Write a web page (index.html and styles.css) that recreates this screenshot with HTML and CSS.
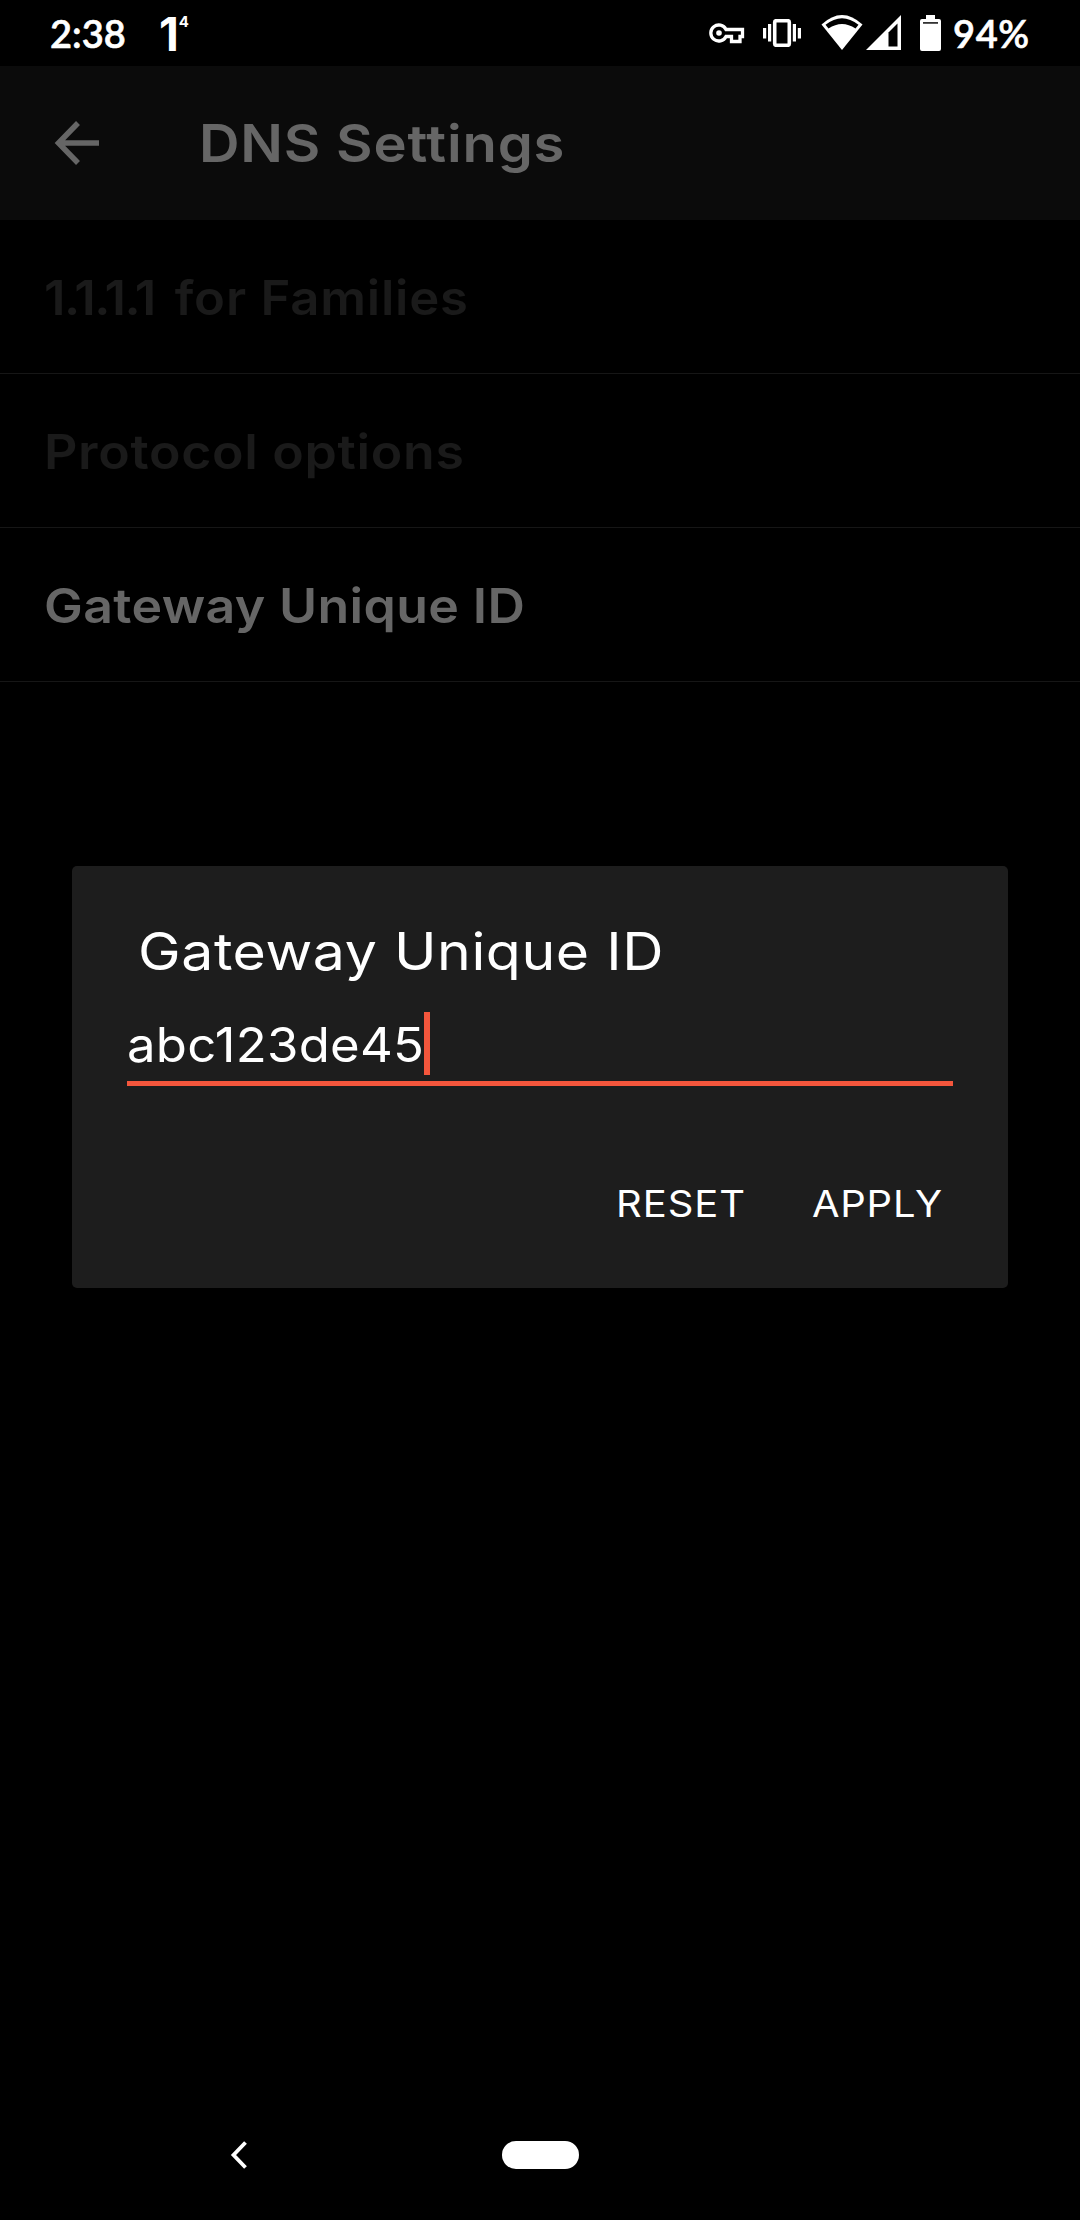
FILE: index.html
```html
<!DOCTYPE html>
<html lang="en">
<head>
<meta charset="utf-8">
<title>DNS Settings</title>
<link rel="stylesheet" href="styles.css">
</head>
<body>
<div class="phone">
  <header class="status">
    <span class="clock">2:38</span>
    <span class="app-mark">1<sup>4</sup></span>
    <div class="status-icons">
      <svg class="key" width="36" height="22" viewBox="0 0 36 22" fill="none" stroke="#fff" stroke-width="3.300"><path d="M17 7.500A8 8 0 1 0 17 14.500H22.500V19.500H31V14.500H33.500V7.500Z"/><circle cx="10" cy="11" r="2.800" fill="#fff" stroke="none"/></svg>
      <svg class="vibrate" width="40" height="28" viewBox="0 0 40 28" fill="#fff"><path d="M1 9h3.200v10.500H1zM6 5h3.200v17.500H6zM30.800 5h3.200v17.500h-3.200zM35.800 9h3.200v10.500h-3.200z"/><rect x="12.700" y="1.700" width="14.600" height="24.600" rx="1.500" fill="none" stroke="#fff" stroke-width="3.600"/></svg>
      <svg class="wifi" width="42" height="35" viewBox="0 0 42 35"><path d="M.5 9.500Q21-9.500 41.500 9.500L21 35Z" fill="#fff"/><path d="M4.500 9.800Q21-3.500 37.500 9.800L34.500 13.500Q21 4.500 7.500 13.500Z" fill="#000"/></svg>
      <svg class="signal" width="35" height="35" viewBox="0 0 35 35"><path d="M0 35 35 0V35Z" fill="#fff"/><path d="M22.500 17.500 31.500 8.500V31.500H22.500Z" fill="#000"/></svg>
      <svg class="battery" width="21" height="36" viewBox="0 0 21 36"><path d="M6 0h9v4h4q2 0 2 2v28q0 2-2 2H2q-2 0-2-2V6q0-2 2-2h4z" fill="#fff"/><path d="M3 7h15v1.800H3z" fill="#333"/></svg>
    </div>
    <span class="charge">94%</span>
  </header>

  <div class="app-bar">
    <svg class="back" width="46" height="46" viewBox="0 0 46 46" fill="none" stroke="#666" stroke-width="5.500"><path d="M24 3 4.500 23 24 43M5 23H45"/></svg>
    <h1 class="heading">DNS Settings</h1>
  </div>

  <ul class="options">
    <li class="option disabled families"><span class="label"><span class="address">1.1.1.1</span> for Families</span></li>
    <li class="option disabled protocol"><span class="label">Protocol options</span></li>
    <li class="option gateway"><span class="label">Gateway Unique ID</span></li>
  </ul>

  <main class="dialog">
    <h2 class="dialog-title">Gateway Unique ID</h2>
    <div class="field"><span class="value">abc123de45</span><i class="caret"></i></div>
    <div class="actions"><span class="reset">RESET</span><span class="apply">APPLY</span></div>
  </main>

  <nav class="nav">
    <svg class="nav-back" width="18" height="28" viewBox="0 0 18 28" fill="none" stroke="#fff" stroke-width="3.800"><path d="M15.500 1.500 3.500 14 15.500 26.500"/></svg>
    <span class="home"></span>
  </nav>
</div>
</body>
</html>
```
FILE: styles.css
```css
* { box-sizing: border-box; }
body {
  margin: 0;
  background: #000;
  color: #fff;
  font-family: Inter, "Open Sans", sans-serif;
}
.phone {
  display: flex;
  flex-direction: column;
  width: 1080px;
  height: 2220px;
}
.status {
  display: flex;
  height: 66px;
  padding-left: 50px;
  font-family: Lato, sans-serif;
  font-size: 38px;
  font-weight: 600;
  line-height: 67px;
}
.clock, .charge { -webkit-text-stroke: 0.6px #fff; }
.clock { width: 109px; }
.app-mark {
  display: flex;
  width: 30px;
  font-family: Inter, sans-serif;
  font-size: 46px;
  font-weight: 700;
  line-height: 69px;
}
.app-mark sup { font-size: 15px; line-height: 44px; }
.status-icons { display: flex; width: 236px; margin-left: 519px; }
.key { margin: 22px 0 0 1px; }
.vibrate { margin: 19px 0 0 17px; }
.wifi { margin: 15px 0 0 19px; }
.signal { margin: 15px 0 0 3px; }
.battery { margin: 15px 0 0 19px; }
.charge { margin-left: 9px; letter-spacing: 0.6px; }
.app-bar {
  display: flex;
  align-items: center;
  height: 154px;
  padding-left: 54px;
  background: #0b0b0b;
  color: #666;
}
/* Wide geometric letterforms are approximated by a slight horizontal stretch. */
.heading, .label, .dialog-title, .value, .reset, .apply {
  transform-origin: left center;
  transform: scaleX(1.08);
  white-space: nowrap;
}
.heading {
  margin: 1px 0 0 99px;
  font-size: 52px;
  font-weight: 600;
  letter-spacing: 0.75px;
}
.options { margin: 0; padding: 0; list-style: none; }
.option {
  height: 154px;
  padding-left: 44px;
  border-bottom: 1px solid #161616;
  color: #666;
  font-size: 48px;
  font-weight: 600;
  line-height: 155px;
}
.label { display: inline-block; }
.disabled { color: #1a1a1a; }
.families .label { letter-spacing: 0.75px; transform: scaleX(1.06); }
.families .address { margin-right: 6px; letter-spacing: -1.4px; }
.protocol { letter-spacing: 0.63px; }
.gateway { letter-spacing: 0.33px; }
.dialog {
  width: 936px;
  height: 422px;
  margin: 184px 72px 0;
  padding: 56px 55px 0;
  border-radius: 5px;
  background: #1d1d1d;
}
.dialog-title {
  margin: 0 0 0 11px;
  font-size: 52px;
  font-weight: 400;
  line-height: 60px;
  letter-spacing: 0.5px;
  transform: scaleX(1.1);
}
.field {
  display: flex;
  height: 104px;
  padding-top: 30px;
  border-bottom: 5px solid #f4563c;
  font-size: 48px;
  font-weight: 400;
  line-height: 65px;
}
.value { width: 297px; letter-spacing: 0.23px; transform: scaleX(1.06); }
.caret { width: 6px; height: 63px; background: #f4563c; }
.actions {
  display: flex;
  justify-content: flex-end;
  gap: 66px;
  margin-top: 88px;
  padding-right: 11px;
  font-size: 37px;
  font-weight: 400;
  line-height: 60px;
}
.reset { width: 130px; letter-spacing: 0.9px; }
.apply { width: 130px; letter-spacing: 0.7px; }
.nav {
  display: flex;
  align-items: center;
  height: 131px;
  margin-top: auto;
  padding-left: 230px;
}
.home {
  width: 77px;
  height: 28px;
  margin-left: 254px;
  border-radius: 14px;
  background: #fff;
}
```
